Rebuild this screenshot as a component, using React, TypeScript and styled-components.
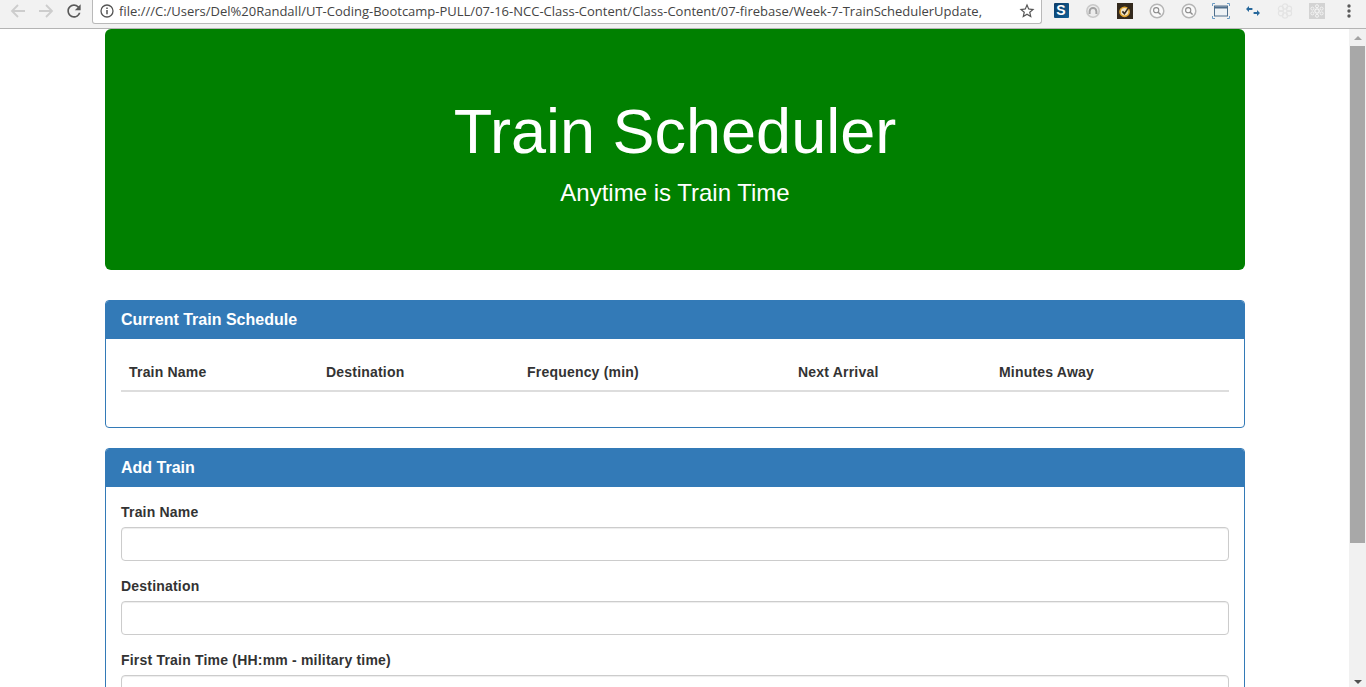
import * as React from 'react';

import styled, { createGlobalStyle } from 'styled-components';

const GlobalStyle = createGlobalStyle`
  html, body {
    margin: 0;
    height: 100%;
    overflow: hidden;
    background: #fff;
  }
  * {
    box-sizing: border-box;
  }
`;

const Root = styled.div`
  display: flex;
  flex-direction: column;
  height: 100vh;
  font-family: 'Liberation Sans', Arial, sans-serif;
  font-size: 14px;
  line-height: 20px;
  color: #333;
`;

const Toolbar = styled.header`
  display: flex;
  flex: none;
  align-items: flex-start;
  height: 29px;
  padding-left: 4px;
  background: #f2f2f2;
  border-bottom: 1px solid #b4b4b4;
`;

const NavButton = styled.span`
  display: flex;
  flex: none;
  align-items: center;
  justify-content: center;
  width: 28px;
  height: 22px;
`;

const UrlBar = styled.div`
  display: flex;
  flex: none;
  align-items: center;
  width: 950px;
  height: 24px;
  margin-left: 4px;
  padding: 0 5px 2px 7px;
  background: #fff;
  border: 1px solid #b9b9b9;
  border-top: 0;
  border-radius: 0 0 3px 3px;
`;

const UrlText = styled.span`
  flex: 1;
  margin-left: 5px;
  overflow: hidden;
  font-family: 'Open Sans', sans-serif;
  font-size: 13px;
  line-height: 20px;
  color: #444;
  white-space: nowrap;
`;

const Extensions = styled.div`
  display: flex;
  flex: none;
  margin-left: 3px;
`;

const ExtensionSlot = styled.span`
  display: flex;
  align-items: center;
  justify-content: center;
  width: 32px;
  height: 21px;
`;

const SearchBadge = styled.span`
  display: flex;
  align-items: center;
  justify-content: center;
  width: 15px;
  height: 15px;
  font-family: 'Liberation Sans', Arial, sans-serif;
  font-size: 14px;
  font-weight: 700;
  line-height: 15px;
  color: #fff;
  background: linear-gradient(135deg, #0d3c68, #0f5f96);
  border-radius: 1px;
`;

const Viewport = styled.div`
  display: flex;
  flex: 1;
  min-height: 0;
`;

const Page = styled.main`
  flex: 1;
  min-width: 0;
  overflow: hidden;
  background: #fff;
`;

const Container = styled.div`
  width: 1140px;
  margin-left: 105px;
`;

const Jumbotron = styled.section`
  height: 241px;
  margin-bottom: 30px;
  padding: 68px 60px 0;
  color: #fff;
  text-align: center;
  background: #008000;
  border-radius: 6px;
`;

const Title = styled.h1`
  margin: 0 0 10px;
  font-size: 63px;
  font-weight: 400;
  line-height: 69px;
`;

const Tagline = styled.p`
  margin: 0;
  font-size: 24px;
  line-height: 34px;
`;

const Panel = styled.section`
  margin-bottom: 20px;
  background: #fff;
  border: 1px solid #337ab7;
  border-radius: 4px;
`;

const PanelHeading = styled.h3`
  height: 38px;
  margin: 0;
  padding: 10px 15px;
  font-size: 16px;
  font-weight: 700;
  line-height: 18px;
  color: #fff;
  background: #337ab7;
  border-radius: 3px 3px 0 0;
`;

const PanelBody = styled.div`
  padding: 15px;
`;

const ScheduleTable = styled.table`
  width: 100%;
  margin-bottom: 20px;
  border-collapse: collapse;
  border-spacing: 0;
  table-layout: fixed;
`;

const HeaderCell = styled.th<{ $width: number }>`
  width: ${(p) => p.$width}px;
  padding: 8px;
  font-size: 14px;
  font-weight: 700;
  line-height: 20px;
  letter-spacing: 0.2px;
  text-align: left;
  border-bottom: 2px solid #ddd;
`;

const FormGroup = styled.div`
  margin-bottom: 15px;
`;

const FieldLabel = styled.label`
  display: block;
  margin-bottom: 5px;
  font-weight: 700;
  letter-spacing: 0.2px;
`;

const TextInput = styled.input`
  display: block;
  width: 100%;
  height: 34px;
  padding: 6px 12px;
  font-size: 14px;
  background: #fff;
  border: 1px solid #ccc;
  border-radius: 4px;
  box-shadow: inset 0 1px 1px rgba(0, 0, 0, 0.075);
`;

const Scrollbar = styled.aside`
  display: flex;
  flex: none;
  flex-direction: column;
  align-items: center;
  width: 17px;
  background: #f1f1f1;
`;

const ScrollArrow = styled.span<{ $down?: boolean }>`
  flex: none;
  width: 0;
  height: 0;
  margin: ${(p) => (p.$down ? 'auto 0 3px' : '7px 0 0')};
  border-right: 4px solid transparent;
  border-left: 4px solid transparent;
  ${(p) => (p.$down ? 'border-top: 4px solid #505050;' : 'border-bottom: 4px solid #a3a3a3;')}
`;

const ScrollThumb = styled.span`
  flex: none;
  width: 15px;
  height: 497px;
  margin-top: 6px;
  background: #a8a8a8;
`;

const columns = [
  { label: 'Train Name', width: 197 },
  { label: 'Destination', width: 201 },
  { label: 'Frequency (min)', width: 271 },
  { label: 'Next Arrival', width: 201 },
  { label: 'Minutes Away', width: 238 },
];

const fields = ['Train Name', 'Destination', 'First Train Time (HH:mm - military time)'];

const MagnifierBadge = () => (
  <svg width="16" height="16" viewBox="0 0 16 16">
    <circle cx="8" cy="8" r="6.8" fill="#fafafa" stroke="#b5b5b5" strokeWidth="1.5" />
    <circle cx="7.2" cy="7.2" r="2.6" fill="none" stroke="#8c8c8c" strokeWidth="1.1" />
    <path d="M9.2 9.2l2.4 2.4" stroke="#8c8c8c" strokeWidth="1.4" />
  </svg>
);

const AtomIcon = ({ color }: { color: string }) => (
  <svg width="18" height="18" viewBox="0 0 18 18" fill="none" stroke={color} strokeWidth="1.2">
    <circle cx="9" cy="4.5" r="2.6" />
    <circle cx="9" cy="13.5" r="2.6" />
    <circle cx="5" cy="6.8" r="2.6" />
    <circle cx="13" cy="6.8" r="2.6" />
    <circle cx="5" cy="11.2" r="2.6" />
    <circle cx="13" cy="11.2" r="2.6" />
  </svg>
);

const BrowserToolbar = () => (
  <Toolbar>
    <NavButton>
      <svg width="16" height="16" viewBox="0 0 16 16" fill="none" stroke="#cdcdcd" strokeWidth="1.8">
        <path d="M15 8H2M8 2L2 8l6 6" />
      </svg>
    </NavButton>
    <NavButton>
      <svg width="16" height="16" viewBox="0 0 16 16" fill="none" stroke="#cdcdcd" strokeWidth="1.8">
        <path d="M1 8h13M8 2l6 6-6 6" />
      </svg>
    </NavButton>
    <NavButton>
      <svg width="20" height="20" viewBox="0 0 24 24" fill="#5a5a5a">
        <path d="M17.65 6.35A7.958 7.958 0 0012 4c-4.42 0-7.99 3.58-7.99 8s3.57 8 7.99 8c3.73 0 6.84-2.55 7.73-6h-2.08A5.99 5.99 0 0112 18c-3.31 0-6-2.69-6-6s2.69-6 6-6c1.66 0 3.14.69 4.22 1.78L13 11h7V4l-2.35 2.35z" />
      </svg>
    </NavButton>
    <UrlBar>
      <svg width="14" height="14" viewBox="0 0 14 14" fill="none">
        <circle cx="7" cy="7" r="6" stroke="#555" strokeWidth="1.3" />
        <path d="M7 6v4.2" stroke="#555" strokeWidth="1.5" />
        <path d="M7 3.4v1.5" stroke="#555" strokeWidth="1.5" />
      </svg>
      <UrlText>
        file:///C:/Users/Del%20Randall/UT-Coding-Bootcamp-PULL/07-16-NCC-Class-Content/Class-Content/07-firebase/Week-7-TrainSchedulerUpdate,
      </UrlText>
      <svg width="18" height="18" viewBox="0 0 24 24" fill="#555">
        <path d="M22 9.24l-7.19-.62L12 2 9.19 8.63 2 9.24l5.46 4.73L5.82 21 12 17.27 18.18 21l-1.63-7.03L22 9.24zM12 15.4l-3.76 2.27 1-4.28-3.32-2.88 4.38-.38L12 6.1l1.71 4.04 4.38.38-3.32 2.88 1 4.28L12 15.4z" />
      </svg>
    </UrlBar>
    <Extensions>
      <ExtensionSlot>
        <SearchBadge>S</SearchBadge>
      </ExtensionSlot>
      <ExtensionSlot>
        <svg width="16" height="16" viewBox="0 0 16 16" fill="none">
          <circle cx="8" cy="8" r="7" fill="#c9c9c9" />
          <circle cx="8" cy="8" r="5.4" fill="#ececec" />
          <path d="M4.6 11V8.4a3.4 3.4 0 016.8 0V11" stroke="#a3a3a3" strokeWidth="2" />
        </svg>
      </ExtensionSlot>
      <ExtensionSlot>
        <svg width="16" height="16" viewBox="0 0 16 16" fill="none">
          <rect width="16" height="16" fill="#33291d" />
          <circle cx="7.6" cy="8.8" r="4.6" fill="#f1e4c4" stroke="#e0a52e" strokeWidth="1.6" />
          <path d="M5.4 8.4l2 2.2L13 2.6" stroke="#33291d" strokeWidth="1.6" />
        </svg>
      </ExtensionSlot>
      <ExtensionSlot>
        <MagnifierBadge />
      </ExtensionSlot>
      <ExtensionSlot>
        <MagnifierBadge />
      </ExtensionSlot>
      <ExtensionSlot>
        <svg width="18" height="16" viewBox="0 0 18 16" fill="none">
          <rect x="2.5" y="3" width="13" height="10" fill="#eef2f5" stroke="#4f6f8c" strokeWidth="1" />
          <path d="M2.5 4.5h13" stroke="#4f6f8c" strokeWidth="2" />
          <path d="M0.5 3V0.5H3M15 0.5h2.5V3M0.5 13v2.5H3M15 15.5h2.5V13" stroke="#6e9cc4" strokeWidth="1" />
        </svg>
      </ExtensionSlot>
      <ExtensionSlot>
        <svg width="14" height="10" viewBox="0 0 14 10" fill="#27689c">
          <path d="M0 3l3-3v2h3.4v2H3v2zM14 7l-3-3v2H7.6v2H11v2z" />
        </svg>
      </ExtensionSlot>
      <ExtensionSlot>
        <AtomIcon color="#e4e4e4" />
      </ExtensionSlot>
      <ExtensionSlot>
        <svg width="16" height="16" viewBox="0 0 16 16" fill="none">
          <rect width="16" height="16" fill="#d3d3d3" />
          <circle cx="8" cy="8" r="2.2" stroke="#f4f4f4" strokeWidth="1.2" />
          <circle cx="8" cy="3.2" r="1.5" stroke="#f4f4f4" />
          <circle cx="8" cy="12.8" r="1.5" stroke="#f4f4f4" />
          <circle cx="3.4" cy="5.6" r="1.5" stroke="#f4f4f4" />
          <circle cx="12.6" cy="5.6" r="1.5" stroke="#f4f4f4" />
          <circle cx="3.4" cy="10.4" r="1.5" stroke="#f4f4f4" />
          <circle cx="12.6" cy="10.4" r="1.5" stroke="#f4f4f4" />
        </svg>
      </ExtensionSlot>
      <ExtensionSlot>
        <svg width="4" height="14" viewBox="0 0 4 14" fill="#5a5a5a">
          <circle cx="2" cy="2" r="1.7" />
          <circle cx="2" cy="7" r="1.7" />
          <circle cx="2" cy="12" r="1.7" />
        </svg>
      </ExtensionSlot>
    </Extensions>
  </Toolbar>
);

export default function App() {
  return (
    <Root>
      <GlobalStyle />
      <BrowserToolbar />
      <Viewport>
        <Page>
          <Container>
            <Jumbotron>
              <Title>Train Scheduler</Title>
              <Tagline>Anytime is Train Time</Tagline>
            </Jumbotron>
            <Panel>
              <PanelHeading>Current Train Schedule</PanelHeading>
              <PanelBody>
                <ScheduleTable>
                  <thead>
                    <tr>
                      {columns.map((col) => (
                        <HeaderCell key={col.label} $width={col.width}>
                          {col.label}
                        </HeaderCell>
                      ))}
                    </tr>
                  </thead>
                </ScheduleTable>
              </PanelBody>
            </Panel>
            <Panel>
              <PanelHeading>Add Train</PanelHeading>
              <PanelBody>
                {fields.map((field) => (
                  <FormGroup key={field}>
                    <FieldLabel>{field}</FieldLabel>
                    <TextInput type="text" />
                  </FormGroup>
                ))}
              </PanelBody>
            </Panel>
          </Container>
        </Page>
        <Scrollbar>
          <ScrollArrow />
          <ScrollThumb />
          <ScrollArrow $down />
        </Scrollbar>
      </Viewport>
    </Root>
  );
}
